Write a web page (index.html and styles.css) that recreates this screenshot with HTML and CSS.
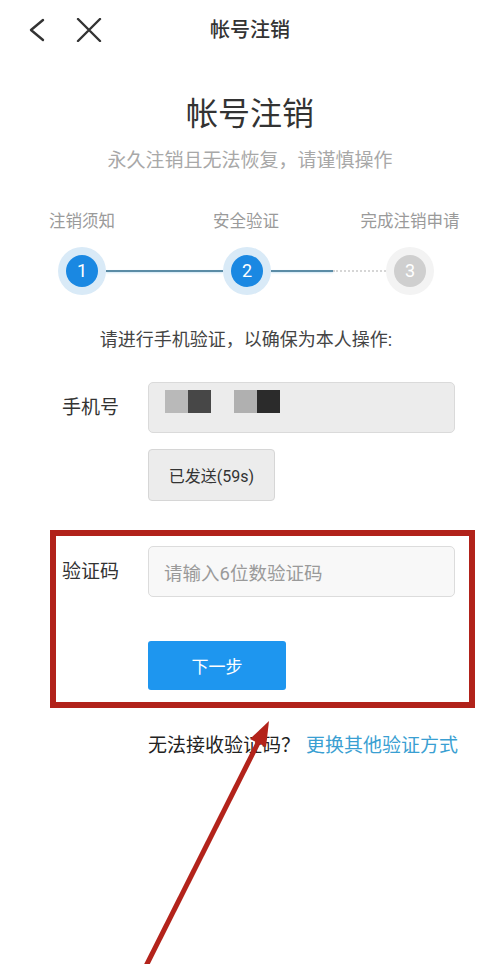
FILE: index.html
```html
<!DOCTYPE html>
<html lang="zh-CN">
<head>
<meta charset="utf-8">
<title>帐号注销</title>
<link rel="stylesheet" href="styles.css">
</head>
<body>
<div class="page">
  <header class="nav">
    <div class="nav-left">
      <svg class="nav-icon" width="20" height="24" viewBox="0 0 20 24"><polyline points="16,2 4,12 16,22" fill="none" stroke="#333" stroke-width="2.4" stroke-linecap="round" stroke-linejoin="round"/></svg>
      <svg class="nav-icon close" width="26" height="24" viewBox="0 0 26 24"><path d="M2 1 L24 23 M24 1 L2 23" fill="none" stroke="#333" stroke-width="2.4" stroke-linecap="round"/></svg>
    </div>
    <div class="nav-title">帐号注销</div>
    <div></div>
  </header>

  <section class="hero">
    <h1 class="hero-title">帐号注销</h1>
    <p class="hero-sub">永久注销且无法恢复，请谨慎操作</p>
  </section>

  <section class="steps">
    <div class="step-labels">
      <span>注销须知</span>
      <span>安全验证</span>
      <span>完成注销申请</span>
    </div>
    <div class="step-track">
      <div class="dot done"><span>1</span></div>
      <div class="line solid"></div>
      <div class="dot done"><span>2</span></div>
      <div class="line half"><i class="seg-solid"></i><i class="seg-dotted"></i></div>
      <div class="dot todo"><span>3</span></div>
    </div>
  </section>

  <p class="instruction">请进行手机验证，以确保为本人操作:</p>

  <div class="row phone-row">
    <label class="row-label">手机号</label>
    <div class="phone-box">
      <span class="mask light"></span><span class="mask dark"></span>
      <span class="mask light gap"></span><span class="mask darker"></span>
    </div>
  </div>

  <div class="row">
    <span></span>
    <button class="send-btn">已发送(59s)</button>
  </div>

  <div class="highlight">
    <div class="row inner">
      <label class="row-label">验证码</label>
      <div class="code-box">请输入6位数验证码</div>
    </div>
    <div class="row inner next-row">
      <span></span>
      <button class="next-btn">下一步</button>
    </div>
  </div>

  <p class="help">无法接收验证码？<a class="help-link">更换其他验证方式</a></p>

  <svg class="arrow" width="500" height="964" viewBox="0 0 500 964">
    <line x1="146" y1="966" x2="261" y2="737" stroke="#b3231b" stroke-width="5"/>
    <polygon points="269,721 266,747 250,739" fill="#b3231b"/>
  </svg>
</div>
</body>
</html>
```

FILE: styles.css
```css
* { box-sizing: border-box; }
html, body { margin: 0; padding: 0; background: #fff; }
body {
  font-family: Roboto, "Noto Sans CJK SC", "Noto Sans", sans-serif;
  color: #333;
}
.page {
  position: relative;
  width: 500px;
  height: 964px;
  overflow: hidden;
}
.nav {
  height: 60px;
  display: grid;
  grid-template-columns: 1fr auto 1fr;
  align-items: center;
}
.nav-left {
  display: flex;
  align-items: center;
  padding-left: 27px;
  gap: 29px;
}
.nav-icon { display: block; }
.nav-title {
  font-size: 20px;
  line-height: 24px;
  color: #333;
  font-weight: 500;
}
.hero { text-align: center; }
.hero-title {
  margin: 34px 0 0;
  font-size: 32px;
  line-height: 40px;
  font-weight: 400;
  color: #333;
}
.hero-sub {
  margin: 14px 0 0;
  font-size: 19px;
  line-height: 26px;
  color: #a8a8a8;
}
.steps { margin-top: 36px; }
.step-labels {
  display: grid;
  grid-template-columns: 164px 164px 164px;
  text-align: center;
  font-size: 16.5px;
  line-height: 24px;
  color: #9a9a9a;
}
.step-track {
  margin-top: 13px;
  display: flex;
  align-items: center;
  padding-left: 58px;
  height: 48px;
}
.dot {
  width: 48px;
  height: 48px;
  border-radius: 50%;
  display: flex;
  align-items: center;
  justify-content: center;
  flex: none;
}
.dot span {
  width: 32px;
  height: 32px;
  border-radius: 50%;
  display: flex;
  align-items: center;
  justify-content: center;
  color: #fff;
  font-size: 18px;
  line-height: 1;
}
.dot.done { background: #d9eaf7; }
.dot.done span { background: #1a88e2; }
.dot.todo { background: #f3f3f3; }
.dot.todo span { background: #cfcfcf; }
.line { height: 2px; flex: none; }
.line.solid { width: 117px; background: #5b8ca6; box-shadow: 0 1px 2px #cfe6f5; }
.line.half { width: 115px; display: flex; }
.seg-solid { display: block; width: 62px; height: 2px; background: #5b8ca6; box-shadow: 0 1px 2px #cfe6f5; }
.seg-dotted { display: block; flex: 1; height: 0; border-top: 2px dotted #d6d6d6; }

.instruction {
  margin: 32px 0 0;
  text-align: center;
  font-size: 18px;
  line-height: 26px;
  color: #444;
  padding-right: 8px;
}
.row {
  display: grid;
  grid-template-columns: 148px 307px;
  align-items: center;
}
.phone-row { margin-top: 29px; }
.row-label {
  padding-left: 62px;
  font-size: 19px;
  line-height: 26px;
  color: #333;
}
.phone-box {
  height: 51px;
  background: #ececec;
  border: 1px solid #dadada;
  border-radius: 5px;
  display: flex;
  align-items: flex-start;
  padding: 7px 0 0 16px;
}
.mask { display: block; width: 23px; height: 23px; }
.mask.light { background: #b9b9b9; }
.mask.dark { background: #474747; }
.mask.darker { background: #2b2b2b; }
.mask.gap { margin-left: 23px; background: #b0b0b0; }
.send-btn {
  margin-top: 16px;
  width: 127px;
  height: 52px;
  background: #ececec;
  border: 1px solid #d6d6d6;
  border-radius: 4px;
  font-family: inherit;
  font-size: 16px;
  color: #333;
  padding: 0;
}
.highlight {
  margin: 29px 0 0 50px;
  width: 425px;
  height: 178px;
  border: 6px solid #b1221a;
  padding-top: 10px;
}
.row.inner { grid-template-columns: 92px 307px; }
.row.inner .row-label { padding-left: 6px; }
.code-box {
  height: 51px;
  background: #f8f8f8;
  border: 1px solid #dcdcdc;
  border-radius: 5px;
  padding-left: 15px;
  display: flex;
  align-items: center;
  font-size: 18.5px;
  color: #9a9a9a;
}
.next-row { margin-top: 44px; }
.next-btn {
  width: 138px;
  height: 49px;
  background: #1e96ef;
  border: none;
  border-radius: 3px;
  color: #fff;
  font-family: inherit;
  font-size: 17px;
  padding: 0;
}
.help {
  margin: 25px 0 0;
  padding-left: 148px;
  font-size: 19px;
  line-height: 26px;
  color: #222;
  white-space: nowrap;
}
.help-link { margin-left: 6px; color: #3a9fd2; }
.arrow {
  position: absolute;
  left: 0;
  top: 0;
  pointer-events: none;
}
```
